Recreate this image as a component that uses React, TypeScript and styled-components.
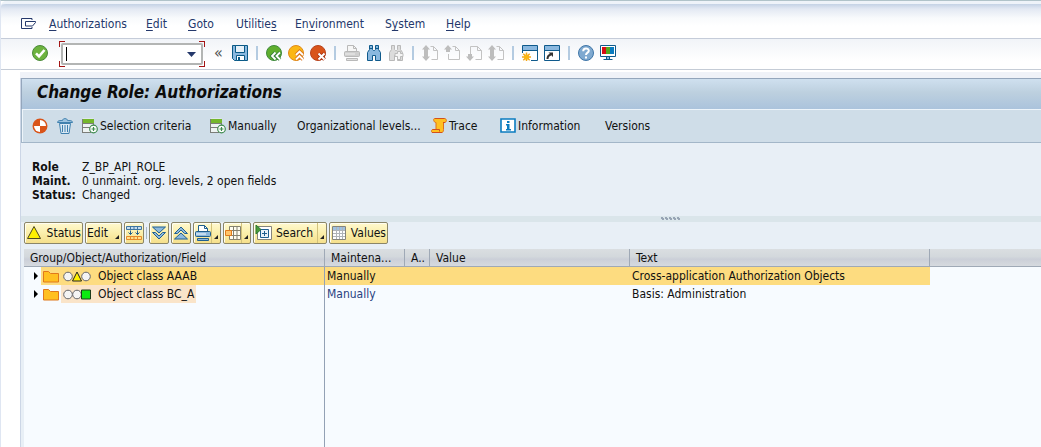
import React from "react";
import styled, { createGlobalStyle, css } from "styled-components";

const GlobalStyle = createGlobalStyle`
  *, *::before, *::after { box-sizing: border-box; }
  html, body { margin: 0; padding: 0; }
  body {
    background: #fff;
    color: #111;
    font: 12px/14px "DejaVu Sans Condensed", Tahoma, sans-serif;
  }
  button, input { font: inherit; color: inherit; }
  h1, dl, dd, dt { margin: 0; font-size: inherit; }
`;

/* ---------- layout ---------- */

const Page = styled.div`
  display: flex;
  flex-direction: column;
  min-height: 100vh;
  border-left: 1px solid #dfe6f2;
  border-top: 1px solid #b0c3c9;
  background: #fff;
`;

const MenuBar = styled.nav`
  display: grid;
  grid-template-columns: 28px 97px 42px 48px 59px 90px 61px 1fr;
  align-items: center;
  height: 38px;
  padding: 6px 0 0 20px;
  border-top: 3px solid #eef3f9;
  border-bottom: 1px solid #c5ccd9;
  border-top-left-radius: 5px;
  background: linear-gradient(#c4d2e5, #e3e9f3 5px, #f8fafc 14px, #fff 22px);
`;

const PlainButton = styled.button`
  display: flex;
  align-items: center;
  gap: 2px;
  padding: 0;
  border: 0;
  background: none;
  white-space: nowrap;
  text-align: left;
  cursor: pointer;
`;

const MenuItem = styled(PlainButton)`
  display: block;
  color: #24386b;
  u { text-underline-offset: 2px; }
`;

const SystemBar = styled.div`
  display: flex;
  align-items: center;
  gap: 9px;
  height: 31px;
  padding-left: 31px;
  border-bottom: 1px solid #c5ccd6;
  background: linear-gradient(#f1f4f8, #fff 22px);
`;

const IconGroup = styled.div`
  display: flex;
  align-items: center;
  gap: 6px;
  height: 30px;
  padding-bottom: 2px;
`;

const Divider = styled.span`
  width: 2px;
  height: 14px;
  margin: 0 2px;
  background: #b4cbe1;
`;

const corner = (x: string, y: string) => css`
  linear-gradient(#a31515, #a31515) ${x} ${y} / 6px 1px no-repeat,
  linear-gradient(#a31515, #a31515) ${x} ${y} / 1px 6px no-repeat
`;

const CommandField = styled.div`
  width: 146px;
  height: 26px;
  margin-left: 2px;
  padding: 2px;
  background:
    ${corner("left", "top")}, ${corner("right", "top")},
    ${corner("left", "bottom")}, ${corner("right", "bottom")};
`;

const CommandBox = styled.div`
  display: flex;
  align-items: center;
  height: 22px;
  padding: 0 5px 0 3px;
  border: 2px solid #b3b5b4;
  border-radius: 2px;
  background: #fff;
`;

const Caret = styled.span`
  width: 1px;
  height: 14px;
  background: #000;
`;

const CommandInput = styled.input`
  flex: 1;
  min-width: 0;
  padding: 0 2px;
  border: 0;
  outline: 0;
  background: none;
`;

const Collapse = styled(PlainButton)`
  width: 12px;
  color: #555;
  font-size: 16px;
`;

const Work = styled.main`
  display: flex;
  flex: 1;
  flex-direction: column;
  margin: 8px 0 0 19px;
  border-left: 1px solid #ccd6e6;
  background: #e8eff6;
  box-shadow: 0 -6px 0 #eff2f8;
`;

const TitleBar = styled.header`
  display: flex;
  align-items: center;
  height: 31px;
  padding: 0 15px 4px;
  border-top: 1px solid #94a6bc;
  border-left: 1px solid #94a6bc;
  background: linear-gradient(#cfe0ef, #bdd0df 45%, #abc3dc);
  h1 {
    color: #0b0b0b;
    font-size: 17px;
    line-height: 20px;
    font-style: italic;
    font-weight: bold;
  }
`;

const AppBar = styled.div`
  display: grid;
  grid-template-columns: 25px 25px 128px 87px 134px 69px 105px 1fr;
  align-items: center;
  height: 34px;
  padding-left: 10px;
  border: solid #a3b6c8;
  border-width: 0 0 1px 1px;
  box-shadow: inset 1px 1px 0 #edf4fa;
  background: #cfdde8;
`;

const Info = styled.dl`
  display: grid;
  grid-template-columns: 50px 1fr;
  padding: 17px 11px 14px;
  dt { font-weight: bold; }
`;

const Splitter = styled.div`
  display: flex;
  justify-content: center;
  height: 6px;
  padding: 1px 0 0 280px;
  background: #dae5ea;
`;

const GridArea = styled.section`
  display: flex;
  flex: 1;
  flex-direction: column;
  padding-left: 3px;
`;

const GridBar = styled.div`
  display: flex;
  align-items: center;
  gap: 2px;
  height: 27px;
  padding-bottom: 5px;
`;

const GridButton = styled.button<{ $w: number }>`
  display: flex;
  align-items: center;
  justify-content: space-between;
  flex: none;
  width: ${(p) => p.$w}px;
  height: 22px;
  padding: 0 1px;
  border: 1px solid #8b8668;
  border-radius: 2px;
  background: linear-gradient(#fff9cf, #fbefab 50%, #f5e08c);
  box-shadow: inset 1px 1px 0 #fffef0;
  white-space: nowrap;
  svg { flex: none; }
`;

const GridDivider = styled.span`
  width: 1px;
  height: 12px;
  background: #a9b6c2;
`;

const DropMark = styled.span<{ $split?: boolean }>`
  display: flex;
  align-items: flex-end;
  justify-content: flex-end;
  align-self: stretch;
  width: 8px;
  padding: 0 1px 4px 0;
  border-left: 1px solid ${(p) => (p.$split ? "#d2c27c" : "transparent")};
  &::after {
    content: "";
    border-bottom: 4px solid #222;
    border-left: 4px solid transparent;
  }
`;

const GridBody = styled.div`
  flex: 1;
  background:
    linear-gradient(#93a1b5, #93a1b5) 300px 0 / 1px 100% no-repeat,
    #f7fbff;
`;

const Table = styled.table`
  width: 100%;
  table-layout: fixed;
  border-collapse: separate;
  border-spacing: 0;
`;

const Th = styled.th`
  height: 18px;
  padding: 0 5px 0 6px;
  overflow: hidden;
  border-bottom: 1px solid #9fa9b6;
  border-right: 1px solid #9fa9b6;
  background: linear-gradient(#dadee1, #d3d8dc 45%, #cbcfd8 60%, #d6dadf);
  font-weight: normal;
  text-align: left;
  white-space: nowrap;
  &:last-child { border-right: 0; }
`;

const Tr = styled.tr<{ $selected?: boolean }>`
  td:not(:last-child) {
    background: ${(p) => (p.$selected ? "#fddc80" : "transparent")};
  }
  td:first-child {
    background: ${(p) =>
      p.$selected ? "linear-gradient(#fddc80, #fddc80) 17px 0 no-repeat" : "transparent"};
    border-right: 1px solid #93a1b5;
  }
`;

const Td = styled.td<{ $link?: boolean }>`
  height: 18px;
  padding: 0 2px;
  color: ${(p) => (p.$link ? "#28427f" : "#111")};
  white-space: nowrap;
`;

const Node = styled.div`
  display: flex;
  align-items: center;
  gap: 2px;
  height: 18px;
  padding-left: 4px;
`;

const NodeLabel = styled.span<{ $tint?: boolean }>`
  display: flex;
  align-items: center;
  gap: 7px;
  height: 18px;
  padding: 0 2px;
  background: ${(p) => (p.$tint ? "#fae4c9" : "transparent")};
`;

/* ---------- icons ---------- */

type IconProps = { children: React.ReactNode; w?: number; h?: number };
const Icon = ({ children, w = 16, h = 16 }: IconProps) => (
  <svg width={w} height={h} viewBox={`0 0 ${w} ${h}`} fill="none" aria-hidden="true">
    {children}
  </svg>
);

const SystemMenuIcon = () => (
  <Icon>
    <path d="M11 4V2.5H.5v10H11V11" stroke="#24386b" />
    <path d="M4.500 5.500h10v1l-3 3.500h-7z" fill="#fff" stroke="#24386b" />
  </Icon>
);
const OkIcon = () => (
  <Icon>
    <circle cx="8" cy="8" r="7.500" fill="#6db33f" stroke="#4b8a3a" />
    <path d="M4 8.300l3 3 5.500-6.300" stroke="#fff" strokeWidth="2.600" />
  </Icon>
);
const DownArrow = () => (
  <Icon w={9} h={5}><path d="M0 0h9L4.500 5z" fill="#24386b" /></Icon>
);
const SaveIcon = () => (
  <Icon>
    <path d="M.5.500h15v15H2.500l-2-2z" fill="#8ab8df" stroke="#0a5a87" />
    <path d="M3.500.500h9v7h-9z" fill="#e6f1f9" stroke="#0a5a87" />
    <path d="M4.500 10.500h8v5h-8z" fill="#fff" stroke="#0a5a87" />
    <path d="M6 12h2v3H6z" fill="#0a5a87" />
  </Icon>
);
const BackIcon = () => (
  <Icon>
    <circle cx="8" cy="8" r="7.500" fill="#5fae2e" stroke="#3f8a3c" />
    <path d="M9.500 7.500L6 11l3.500 3.500M14 7.500L10.500 11l3.500 3.500" stroke="#37803a" strokeWidth="3.600" />
    <path d="M9.500 7.500L6 11l3.500 3.500M14 7.500L10.500 11l3.500 3.500" stroke="#fff" strokeWidth="1.800" />
  </Icon>
);
const ExitIcon = () => (
  <Icon>
    <circle cx="8" cy="8" r="7.500" fill="#fbb714" stroke="#e08a1a" />
    <path d="M8 10l3.500-3.500L15 10M8 14.500l3.500-3.500 3.500 3.500" stroke="#d9761c" strokeWidth="3.600" />
    <path d="M8 10l3.500-3.500L15 10M8 14.500l3.500-3.500 3.500 3.500" stroke="#fff" strokeWidth="1.800" />
  </Icon>
);
const CancelIcon = () => (
  <Icon>
    <circle cx="8" cy="8" r="7.500" fill="#d9541a" stroke="#b8431c" />
    <path d="M8.500 8.500l6 6M14.500 8.500l-6 6" stroke="#a8300f" strokeWidth="3.800" />
    <path d="M8.500 8.500l6 6M14.500 8.500l-6 6" stroke="#fff" strokeWidth="2" />
  </Icon>
);
const PrintIcon = ({ active }: { active?: boolean }) => {
  const s = active ? "#1f5f8f" : "#b9b9b9";
  return (
    <Icon>
      <path d="M3.500 7V.5h6l3 3V7" fill={active ? "#fff" : "#f6f6f6"} stroke={s} />
      <path d="M9.500.5v3h3" stroke={s} />
      <rect x=".5" y="6.500" width="15" height="5" rx="1" fill={active ? "#8db9dd" : "#cfcfcf"} stroke={s} />
      <path d="M1 9h10" stroke={active ? "#fff" : "#eee"} />
      <path d="M2.500 13.500h11v2h-11z" fill={active ? "#8db9dd" : "#e2e2e2"} stroke={s} />
    </Icon>
  );
};
const BINO = "M3.500.500h3v4l1 1h1l1-1v-4h3v4l2 3v8h-5v-5h-3v5h-5v-8l2-3z";
const FindIcon = () => (
  <Icon>
    <path d={BINO} fill="#8ab8df" stroke="#0f5a8c" />
    <path d="M3.500 3.500h3M9.500 3.500h3" stroke="#0f5a8c" />
  </Icon>
);
const FindNextIcon = () => (
  <Icon>
    <path d={BINO} fill="#dcdcdc" stroke="#b9b9b9" />
    <path d="M9.500 6.500h3v2h2.500v3h-2.500v3h-3v-3H7v-3h2.500z" fill="#f4f4f4" stroke="#bbb" />
  </Icon>
);
const PageIcon = ({ up, down }: { up?: boolean; down?: boolean }) => (
  <Icon>
    <path
      d={up && !down ? "M8.500 1.500h3l4 4v9h-11V9" : down && !up ? "M4.500 9V1.500h7l4 4v9h-6" : "M8.500 1.500h3l4 4v9h-6"}
      stroke="#c3c3c3"
    />
    <path d="M11.500 1.500v4h4" stroke="#c3c3c3" />
    {up && <path d="M4 0l4 4.500H6V7H2V4.500H0z" fill="#bdbdbd" />}
    {up && down && <path d="M2 7h4v2H2z" fill="#bdbdbd" />}
    {down && <path d="M4 16l4-4.500H6V9H2v2.500H0z" fill="#bdbdbd" />}
  </Icon>
);
const NewWindowIcon = () => (
  <Icon>
    <path d="M.5 8V.5h15v15H9" fill="#fff" stroke="#0f5a8c" />
    <path d="M1 1h14v4H1z" fill="#8ab8df" />
    <path d="M.5 5.500h15" stroke="#0f5a8c" />
    <path d="M4.500 7.500v9M0 12h9M1.300 8.800l6.400 6.400M7.700 8.800l-6.400 6.400" stroke="#f3a71a" strokeWidth="1.500" />
    <circle cx="4.500" cy="12" r="2.600" fill="#fbb714" />
  </Icon>
);
const ShortcutIcon = () => (
  <Icon>
    <path d="M.5.500h15v15H.5z" fill="#fff" stroke="#0f5a8c" />
    <path d="M1 1h14v4H1z" fill="#8ab8df" />
    <path d="M.5 5.500h15" stroke="#0f5a8c" />
    <path d="M3.500 14c0-3 1-4 3.500-4.500" stroke="#333" strokeWidth="2" />
    <path d="M4.500 7.500h4.500V12z" fill="#333" />
  </Icon>
);
const HelpIcon = () => (
  <Icon>
    <circle cx="8" cy="8" r="7.500" fill="#7fa9d0" stroke="#3f76a8" />
    <path d="M5.200 6.300c0-3.800 5.600-3.700 5.600-.5 0 2-2.800 1.800-2.800 4.200M8 11.500v2" stroke="#fff" strokeWidth="2" />
  </Icon>
);
const MonitorIcon = () => (
  <Icon>
    <path d="M.5.500h15v11H.5z" fill="#fff" stroke="#0f5a8c" />
    <path d="M2 2h4v7H2z" fill="#d90d14" />
    <path d="M6 2h4v7H6z" fill="#56a81c" />
    <path d="M10 2h4v7h-4z" fill="#0b7cc0" />
    <path d="M6.500 11.500h3v3h-3zM3.500 14.500h9" fill="#8ab8df" stroke="#0f5a8c" />
  </Icon>
);
const StatusBallIcon = () => (
  <Icon>
    <circle cx="8" cy="8" r="7.500" fill="#d9541a" />
    <path d="M8 2a6 6 0 0 1 6 6H8z" fill="#fff" />
    <path d="M8 8v6a6 6 0 0 1-6-6z" fill="#fff" />
  </Icon>
);
const TrashIcon = () => (
  <Icon>
    <path d="M2.500 5.500h11l-1.500 10H4z" fill="#dbe9f4" stroke="#3f80ae" />
    <path d="M5.500 7v7M8 7v7M10.500 7v7" stroke="#3f80ae" />
    <path d="M.5 4.500c0-1.500 1-2 5-2 0-2.500 5-2.500 5 0 4 0 5 .5 5 2z" fill="#9cc3e0" stroke="#3f80ae" />
  </Icon>
);
const AddRowIcon = () => (
  <Icon>
    <path d="M.5.500h11v14H.5z" fill="#eef3f2" />
    <path d="M1 1h11v4H1z" fill="#74b72c" />
    <path d="M.5 1v14M1 5.500h11M11.500 5v3M1 9.500h7M1 14.500h8" stroke="#7b7d78" />
    <circle cx="11.500" cy="11" r="3.800" fill="#fff" stroke="#3d8a4e" strokeWidth="1.200" />
    <path d="M11.500 9v4M9.500 11h4" stroke="#3d8a4e" strokeWidth="1.200" />
  </Icon>
);
const TraceIcon = () => (
  <Icon>
    <path d="M3.500.500h10c2.500 0 2.500 4 0 4h-1v7c0 2-.5 3-2 3h-9c-1.500 0-1.500-3 .5-3h3v-7c-2.500 0-3-4-1.500-4z" fill="#ffc021" stroke="#dd6f1c" />
    <path d="M4 .5h9.500M12 4.500h2M1 14.500h10M1.500 11.500h7v2" stroke="#d3501c" />
  </Icon>
);
const InfoIcon = () => (
  <Icon>
    <path d="M1 1h14v13H1z" fill="#fff" stroke="#0b7cc0" strokeWidth="1.600" />
    <path d="M7 3h2.500v2H7zM6 6h3.500v5H11v1.500H6V11h1V7.500H6z" fill="#0b7cc0" />
  </Icon>
);
const WarnIcon = () => (
  <Icon><path d="M8 1.500l6.500 12h-13z" fill="#fff000" stroke="#4a4720" /></Icon>
);
const LayoutIcon = () => (
  <Icon>
    <path d="M.5 1.500h15v3H.5zM4.500 1.500v3M8 1.500v3M11.500 1.500v3" fill="#c5dcef" stroke="#3f76a0" />
    <path d="M.5 11.500h15v3H.5zM4.500 11.500v3M8 11.500v3M11.500 11.500v3" fill="#ffe08a" stroke="#e58a2c" />
    <path d="M4.500 5.500v4M2.500 7.500l2 2 2-2M11.500 5.500v4M9.500 7.500l2 2 2-2" stroke="#1f5f8f" />
  </Icon>
);
const ExpandIcon = () => (
  <Icon>
    <path d="M1.500 2h13l-6.500 6zM1.500 7.500h3L8 11l3.500-3.500h3L8 14z" fill="#8db9dd" stroke="#1f5f8f" />
  </Icon>
);
const CollapseIcon = () => (
  <Icon>
    <path d="M1.500 14h13L8 8zM1.500 8.500h3L8 5l3.500 3.500h3L8 2z" fill="#8db9dd" stroke="#1f5f8f" />
  </Icon>
);
const CellsIcon = () => (
  <Icon>
    <path d="M4.500 1.500h11v13h-11zM8.500 1.500v13M12 1.500v13M4.500 5.500h11M4.500 10.500h11" fill="#fffdf0" stroke="#85826f" />
    <path d="M.5 5.500h6v5h-6z" fill="#ffc46a" stroke="#e07a1c" />
  </Icon>
);
const SearchIcon = () => (
  <Icon w={17}>
    <path d="M2.500 1.500h14v13h-14z" fill="#fff" stroke="#85857c" />
    <path d="M5.500 4.500h8v8h-8z" fill="#eaf3fa" stroke="#1f5f8f" />
    <path d="M9.500 6v5M7 8.500h5" stroke="#1f5f8f" />
    <path d="M1 0l5 4.500L1 9z" fill="#4a9a3a" stroke="#2c7a33" />
  </Icon>
);
const ValuesIcon = () => (
  <Icon>
    <path d="M1.500 1.500h13v13h-13z" fill="#fff" stroke="#85847a" />
    <path d="M2 2h12v3H2z" fill="#9fc1e0" />
    <path d="M2 5.500h12M2 8.500h12M2 11.500h12M5.500 2v12M8.500 2v12M11.500 2v12" stroke="#b0b4b8" />
  </Icon>
);
const NodeArrow = () => (
  <Icon w={11} h={9}><path d="M4 0l4 4-4 4z" fill="#000" /></Icon>
);
const FolderIcon = () => (
  <Icon w={16} h={13}>
    <path d="M.5 1.500h5l2 2h8v8.500H.5z" fill="#ffc021" stroke="#e0781c" />
  </Icon>
);
const Light = ({ x }: { x: number }) => (
  <circle cx={x} cy="5.500" r="4.300" fill="#f4f4f4" stroke="#66666a" />
);
const Lights = ({ state }: { state: "warn" | "ok" }) => (
  <Icon w={28} h={11}>
    <Light x={5} />
    {state === "warn" ? (
      <>
        <Light x={23} />
        <path d="M14 1l4.500 9h-9z" fill="#fff000" stroke="#222" />
      </>
    ) : (
      <>
        <Light x={14} />
        <path d="M18.500 1h9v9h-9z" fill="#0bea12" stroke="#1c3a1c" />
      </>
    )}
  </Icon>
);
const Grip = () => (
  <Icon w={20} h={4}>
    {[0, 4, 8, 12, 16].map((x) => (
      <path key={x} d={`M${x} 0h2v1h1v2h-2v-1h-1z`} fill="#98a5b5" />
    ))}
  </Icon>
);

/* ---------- data ---------- */

const menus: [string, string, string][] = [
  ["", "A", "uthorizations"],
  ["", "E", "dit"],
  ["", "G", "oto"],
  ["Utilitie", "s", ""],
  ["En", "v", "ironment"],
  ["S", "y", "stem"],
  ["", "H", "elp"],
];

const systemTools: ([string, React.ReactNode] | null)[] = [
  ["Save", <SaveIcon />],
  null,
  ["Back", <BackIcon />],
  ["Exit", <ExitIcon />],
  ["Cancel", <CancelIcon />],
  null,
  ["Print", <PrintIcon />],
  ["Find", <FindIcon />],
  ["Find next", <FindNextIcon />],
  null,
  ["First page", <PageIcon up down />],
  ["Previous page", <PageIcon up />],
  ["Next page", <PageIcon down />],
  ["Last page", <PageIcon up down />],
  null,
  ["New session", <NewWindowIcon />],
  ["Create shortcut", <ShortcutIcon />],
  null,
  ["Help", <HelpIcon />],
  ["Customize layout", <MonitorIcon />],
];

const rows = [
  { label: "Object class AAAB", state: "warn" as const, text: "Cross-application Authorization Objects", selected: true },
  { label: "Object class BC_A", state: "ok" as const, text: "Basis: Administration", selected: false },
];

export default function App() {
  return (
    <Page>
      <GlobalStyle />
      <MenuBar aria-label="Menu">
        <PlainButton aria-label="System menu"><SystemMenuIcon /></PlainButton>
        {menus.map(([a, key, b]) => (
          <MenuItem key={a + key + b}>{a}<u>{key}</u>{b}</MenuItem>
        ))}
      </MenuBar>

      <SystemBar>
        <IconGroup>
          <PlainButton aria-label="Enter"><OkIcon /></PlainButton>
        </IconGroup>
        <CommandField>
          <CommandBox>
            <Caret />
            <CommandInput aria-label="Command" />
            <PlainButton aria-label="Command history"><DownArrow /></PlainButton>
          </CommandBox>
        </CommandField>
        <IconGroup>
          <Collapse aria-label="Hide command field">«</Collapse>
          {systemTools.map((t, i) =>
            t ? <PlainButton key={i} aria-label={t[0]}>{t[1]}</PlainButton> : <Divider key={i} />
          )}
        </IconGroup>
      </SystemBar>

      <Work>
        <TitleBar><h1>Change Role: Authorizations</h1></TitleBar>
        <AppBar>
          <PlainButton aria-label="Status"><StatusBallIcon /></PlainButton>
          <PlainButton aria-label="Delete"><TrashIcon /></PlainButton>
          <PlainButton><AddRowIcon />Selection criteria</PlainButton>
          <PlainButton><AddRowIcon />Manually</PlainButton>
          <PlainButton>Organizational levels...</PlainButton>
          <PlainButton><TraceIcon />Trace</PlainButton>
          <PlainButton><InfoIcon />Information</PlainButton>
          <PlainButton>Versions</PlainButton>
        </AppBar>
        <Info>
          <dt>Role</dt><dd>Z_BP_API_ROLE</dd>
          <dt>Maint.</dt><dd>0 unmaint. org. levels, 2 open fields</dd>
          <dt>Status:</dt><dd>Changed</dd>
        </Info>
        <Splitter><Grip /></Splitter>
        <GridArea>
          <GridBar>
            <GridButton $w={59}><WarnIcon />Status</GridButton>
            <GridButton $w={37}>Edit<DropMark /></GridButton>
            <GridButton $w={20} aria-label="Layout"><LayoutIcon /></GridButton>
            <GridDivider />
            <GridButton $w={20} aria-label="Expand"><ExpandIcon /></GridButton>
            <GridButton $w={20} aria-label="Collapse"><CollapseIcon /></GridButton>
            <GridButton $w={28} aria-label="Print"><PrintIcon active /><DropMark $split /></GridButton>
            <GridButton $w={28} aria-label="Columns"><CellsIcon /><DropMark $split /></GridButton>
            <GridButton $w={74}><SearchIcon />Search<DropMark $split /></GridButton>
            <GridButton $w={59}><ValuesIcon />Values</GridButton>
          </GridBar>
          <GridBody>
            <Table>
              <colgroup>
                <col width="301" />
                <col width="80" />
                <col width="25" />
                <col width="200" />
                <col width="300" />
                <col />
              </colgroup>
              <thead>
                <tr>
                  <Th>Group/Object/Authorization/Field</Th>
                  <Th>Maintena...</Th>
                  <Th>A..</Th>
                  <Th>Value</Th>
                  <Th>Text</Th>
                  <Th />
                </tr>
              </thead>
              <tbody>
                {rows.map((r) => (
                  <Tr key={r.label} $selected={r.selected}>
                    <Td>
                      <Node>
                        <NodeArrow />
                        <FolderIcon />
                        <NodeLabel $tint={!r.selected}>
                          <Lights state={r.state} />
                          {r.label}
                        </NodeLabel>
                      </Node>
                    </Td>
                    <Td $link={!r.selected}>Manually</Td>
                    <Td />
                    <Td />
                    <Td>{r.text}</Td>
                    <Td />
                  </Tr>
                ))}
              </tbody>
            </Table>
          </GridBody>
        </GridArea>
      </Work>
    </Page>
  );
}
